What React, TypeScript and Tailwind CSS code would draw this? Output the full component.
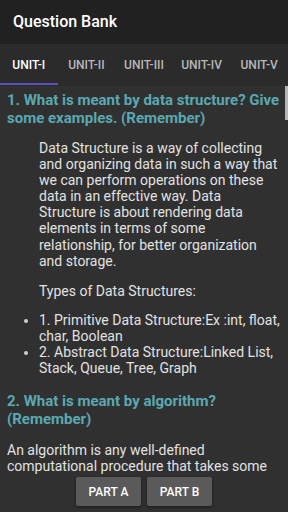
import React from 'react';

const tabs = ['UNIT-I', 'UNIT-II', 'UNIT-III', 'UNIT-IV', 'UNIT-V'];

export default function App() {
  return (
    <div
      className="relative flex h-[512px] w-[288px] flex-col overflow-hidden bg-[#303030]"
      style={{ fontFamily: 'Roboto, "Liberation Sans", sans-serif' }}
    >
      {/* App bar */}
      <div className="flex h-[44px] shrink-0 items-center bg-[#212121] px-[13px]">
        <h1 className="text-[16px] font-medium text-white">Question Bank</h1>
      </div>

      {/* Tabs */}
      <div className="flex h-[42px] shrink-0 bg-[#2b2b2b]">
        {tabs.map((t, i) => (
          <div key={t} className="relative flex flex-1 items-center justify-center">
            <span className={`text-[12px] font-medium ${i === 0 ? 'text-white' : 'text-[#b8b8b8]'}`}>{t}</span>
            {i === 0 && <div className="absolute bottom-[1px] left-0 h-[2px] w-full bg-[#5b4fc2]" />}
          </div>
        ))}
      </div>

      {/* Content */}
      <div className="relative h-[388px] shrink-0 overflow-hidden pl-[7px] pr-[2px] pt-[5px] text-[14px] leading-[16.1px] text-[#e2e2e2]">
        <div className="absolute right-0 top-0 h-[34px] w-[3px] bg-[#b5b5b5]" />
        <h2 className="pr-[5px] text-[15px] font-bold leading-[18px] text-[#5aa9b0]">
          1. What is meant by data structure? Give some examples. (Remember)
        </h2>
        <div className="mt-[13px] pl-[32px] pr-[8px]">
          <p>
            Data Structure is a way of collecting and organizing data in such a way that we can perform operations on
            these data in an effective way. Data Structure is about rendering data elements in terms of some
            relationship, for better organization and storage.
          </p>
          <p className="mt-[14px]">Types of Data Structures:</p>
        </div>
        <ul className="mt-[13px] list-disc pl-[32px] marker:text-[#cfcfcf]">
          <li>1. Primitive Data Structure:Ex :int, float, char, Boolean</li>
          <li>2. Abstract Data Structure:Linked List, Stack, Queue, Tree, Graph</li>
        </ul>
        <h2 className="mt-[16px] pr-[5px] text-[15px] font-bold leading-[18px] text-[#5aa9b0]">
          2. What is meant by algorithm? (Remember)
        </h2>
        <p className="mt-[14px] pr-[5px]">
          An algorithm is any well-defined computational procedure that takes some value, or set of values, as input
          and produces some value, or set of values, as output.
        </p>
      </div>

      {/* Part buttons */}
      <div className="flex flex-1 items-start justify-center gap-[6px] pt-[3px]">
        <button className="flex h-[29px] w-[65px] items-center justify-center rounded-[2px] bg-[#5a5a5a] text-[12px] font-medium text-white shadow-[0_1px_3px_rgba(0,0,0,0.5)]">
          PART A
        </button>
        <button className="flex h-[29px] w-[65px] items-center justify-center rounded-[2px] bg-[#5a5a5a] text-[12px] font-medium text-white shadow-[0_1px_3px_rgba(0,0,0,0.5)]">
          PART B
        </button>
      </div>
    </div>
  );
}
